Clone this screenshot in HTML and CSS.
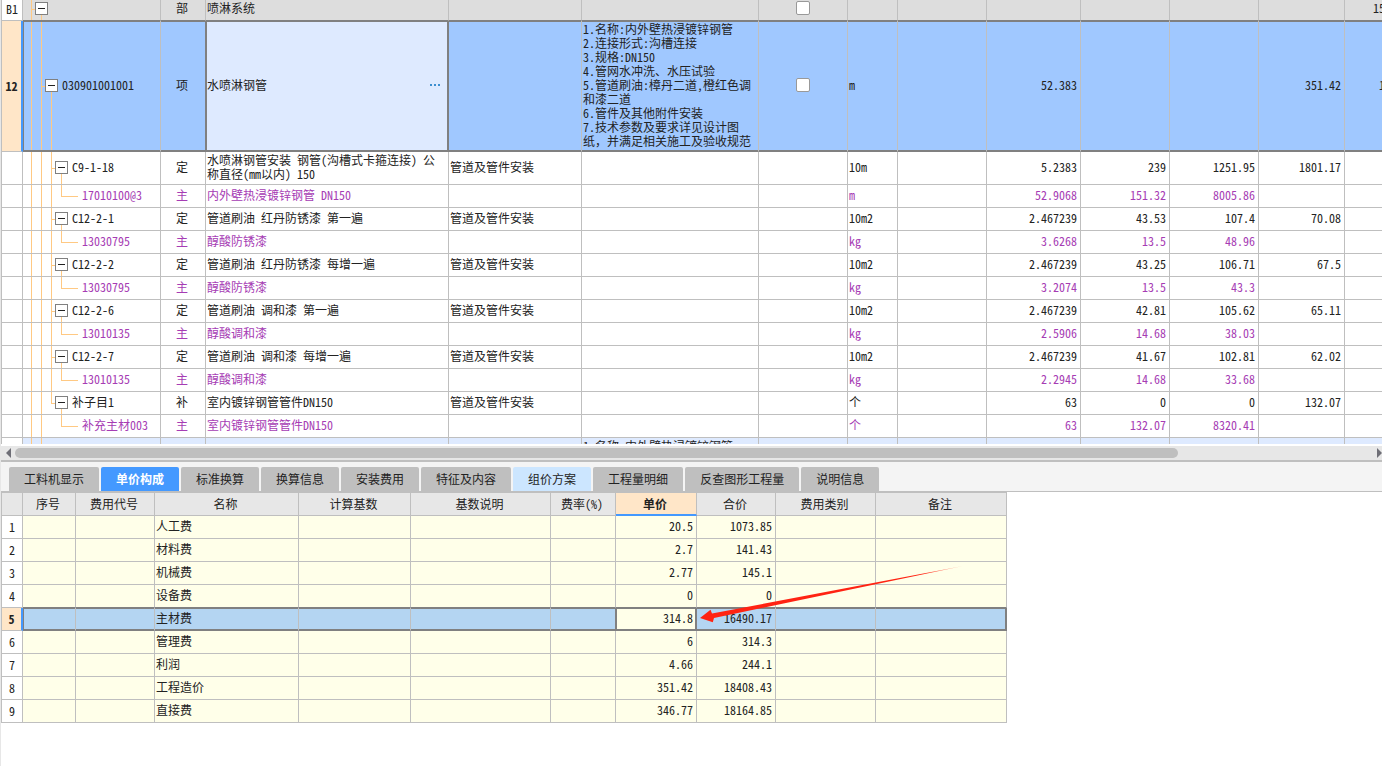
FILE: index.html
```html
<!DOCTYPE html>
<html lang="zh-CN">
<head>
<meta charset="utf-8">
<title>喷淋系统</title>
<link rel="stylesheet" href="styles.css">
</head>
<body>
<main class="app">
<section class="upper">
<table class="grid bill">
<colgroup><col class="w21"><col class="w138"><col class="w45"><col class="w243"><col class="w133"><col class="w177"><col class="w89"><col class="w50"><col class="w89"><col class="w94"><col class="w89"><col class="w89"><col class="w86"><col class="w86"></colgroup>
<tbody>
<tr class="section"><th scope="row">B1</th><td class="tree t1"><button class="fold" aria-label="折叠"></button></td><td class="mid">部</td><td>喷淋系统</td><td></td><td></td><td class="check"><input type="checkbox" aria-label="锁定"></td><td></td><td></td><td></td><td></td><td></td><td></td><td class="num">154620.35</td></tr>
<tr class="item"><th scope="row">12</th><td class="tree t2"><button class="fold" aria-label="折叠"></button>030901001001</td><td class="mid">项</td><td class="editing"><div class="editor"><span>水喷淋钢管</span><button class="more" aria-label="更多"><i></i><i></i><i></i></button></div></td><td></td><td class="desc">1.名称:内外壁热浸镀锌钢管<br>2.连接形式:沟槽连接<br>3.规格:DN150<br>4.管网水冲洗、水压试验<br>5.管道刷油:樟丹二道,橙红色调<br>和漆二道<br>6.管件及其他附件安装<br>7.技术参数及要求详见设计图<br>纸，并满足相关施工及验收规范</td><td class="check"><input type="checkbox" aria-label="锁定"></td><td>m</td><td></td><td class="num">52.383</td><td></td><td></td><td class="num">351.42</td><td class="num">18408.43</td></tr>
<tr class="double"><th></th><td class="tree t3"><button class="fold" aria-label="折叠"></button>C9-1-18</td><td class="mid">定</td><td>水喷淋钢管安装 钢管(沟槽式卡箍连接) 公<br>称直径(mm以内) 150</td><td>管道及管件安装</td><td></td><td></td><td>10m</td><td></td><td class="num">5.2383</td><td class="num">239</td><td class="num">1251.95</td><td class="num">1801.17</td><td></td></tr>
<tr class="material"><th></th><td class="tree t4">17010100@3</td><td class="mid">主</td><td>内外壁热浸镀锌钢管 DN150</td><td></td><td></td><td></td><td>m</td><td></td><td class="num">52.9068</td><td class="num">151.32</td><td class="num">8005.86</td><td></td><td></td></tr>
<tr><th></th><td class="tree t3"><button class="fold" aria-label="折叠"></button>C12-2-1</td><td class="mid">定</td><td>管道刷油 红丹防锈漆 第一遍</td><td>管道及管件安装</td><td></td><td></td><td>10m2</td><td></td><td class="num">2.467239</td><td class="num">43.53</td><td class="num">107.4</td><td class="num">70.08</td><td></td></tr>
<tr class="material"><th></th><td class="tree t4">13030795</td><td class="mid">主</td><td>醇酸防锈漆</td><td></td><td></td><td></td><td>kg</td><td></td><td class="num">3.6268</td><td class="num">13.5</td><td class="num">48.96</td><td></td><td></td></tr>
<tr><th></th><td class="tree t3"><button class="fold" aria-label="折叠"></button>C12-2-2</td><td class="mid">定</td><td>管道刷油 红丹防锈漆 每增一遍</td><td>管道及管件安装</td><td></td><td></td><td>10m2</td><td></td><td class="num">2.467239</td><td class="num">43.25</td><td class="num">106.71</td><td class="num">67.5</td><td></td></tr>
<tr class="material"><th></th><td class="tree t4">13030795</td><td class="mid">主</td><td>醇酸防锈漆</td><td></td><td></td><td></td><td>kg</td><td></td><td class="num">3.2074</td><td class="num">13.5</td><td class="num">43.3</td><td></td><td></td></tr>
<tr><th></th><td class="tree t3"><button class="fold" aria-label="折叠"></button>C12-2-6</td><td class="mid">定</td><td>管道刷油 调和漆 第一遍</td><td>管道及管件安装</td><td></td><td></td><td>10m2</td><td></td><td class="num">2.467239</td><td class="num">42.81</td><td class="num">105.62</td><td class="num">65.11</td><td></td></tr>
<tr class="material"><th></th><td class="tree t4">13010135</td><td class="mid">主</td><td>醇酸调和漆</td><td></td><td></td><td></td><td>kg</td><td></td><td class="num">2.5906</td><td class="num">14.68</td><td class="num">38.03</td><td></td><td></td></tr>
<tr><th></th><td class="tree t3"><button class="fold" aria-label="折叠"></button>C12-2-7</td><td class="mid">定</td><td>管道刷油 调和漆 每增一遍</td><td>管道及管件安装</td><td></td><td></td><td>10m2</td><td></td><td class="num">2.467239</td><td class="num">41.67</td><td class="num">102.81</td><td class="num">62.02</td><td></td></tr>
<tr class="material"><th></th><td class="tree t4">13010135</td><td class="mid">主</td><td>醇酸调和漆</td><td></td><td></td><td></td><td>kg</td><td></td><td class="num">2.2945</td><td class="num">14.68</td><td class="num">33.68</td><td></td><td></td></tr>
<tr><th></th><td class="tree t3 last"><button class="fold" aria-label="折叠"></button>补子目1</td><td class="mid">补</td><td>室内镀锌钢管管件DN150</td><td>管道及管件安装</td><td></td><td></td><td>个</td><td></td><td class="num">63</td><td class="num">0</td><td class="num">0</td><td class="num">132.07</td><td></td></tr>
<tr class="material"><th></th><td class="tree t4 last">补充主材003</td><td class="mid">主</td><td>室内镀锌钢管管件DN150</td><td></td><td></td><td></td><td>个</td><td></td><td class="num">63</td><td class="num">132.07</td><td class="num">8320.41</td><td></td><td></td></tr>
<tr class="next"><th></th><td class="tree t0"></td><td></td><td></td><td></td><td class="desc">1.名称:内外壁热浸镀锌钢管</td><td></td><td></td><td></td><td></td><td></td><td></td><td></td><td></td></tr>
</tbody>
</table>
</section>

<section class="lower">
<div class="scrollbar">
<button class="arrow left" aria-label="向左滚动"><svg width="5" height="10" viewBox="0 0 5 10"><path d="M5 0v10L0 5z"/></svg></button>
<div class="track"><div class="thumb"></div></div>
<button class="arrow right" aria-label="向右滚动"><svg width="5" height="10" viewBox="0 0 5 10"><path d="M0 0v10l5-5z"/></svg></button>
</div>
<nav class="tabs">
<button>工料机显示</button><button class="active">单价构成</button><button>标准换算</button><button>换算信息</button><button>安装费用</button><button>特征及内容</button><button class="hint">组价方案</button><button>工程量明细</button><button>反查图形工程量</button><button>说明信息</button>
</nav>
<div class="detail">
<table class="grid cost">
<colgroup><col class="w21"><col class="w53"><col class="w79"><col class="w144"><col class="w112"><col class="w140"><col class="w65"><col class="w81"><col class="w79"><col class="w100"><col class="w131"></colgroup>
<thead><tr><th></th><th>序号</th><th>费用代号</th><th>名称</th><th>计算基数</th><th>基数说明</th><th>费率(%)</th><th class="current">单价</th><th>合价</th><th>费用类别</th><th>备注</th></tr></thead>
<tbody>
<tr><th scope="row">1</th><td></td><td></td><td>人工费</td><td></td><td></td><td></td><td class="num">20.5</td><td class="num">1073.85</td><td></td><td></td></tr>
<tr><th scope="row">2</th><td></td><td></td><td>材料费</td><td></td><td></td><td></td><td class="num">2.7</td><td class="num">141.43</td><td></td><td></td></tr>
<tr><th scope="row">3</th><td></td><td></td><td>机械费</td><td></td><td></td><td></td><td class="num">2.77</td><td class="num">145.1</td><td></td><td></td></tr>
<tr class="before"><th scope="row">4</th><td></td><td></td><td>设备费</td><td></td><td></td><td></td><td class="num">0</td><td class="num">0</td><td></td><td></td></tr>
<tr class="picked"><th scope="row">5</th><td></td><td></td><td>主材费</td><td></td><td></td><td></td><td class="num focus">314.8</td><td class="num">16490.17</td><td></td><td></td></tr>
<tr><th scope="row">6</th><td></td><td></td><td>管理费</td><td></td><td></td><td></td><td class="num">6</td><td class="num">314.3</td><td></td><td></td></tr>
<tr><th scope="row">7</th><td></td><td></td><td>利润</td><td></td><td></td><td></td><td class="num">4.66</td><td class="num">244.1</td><td></td><td></td></tr>
<tr><th scope="row">8</th><td></td><td></td><td>工程造价</td><td></td><td></td><td></td><td class="num">351.42</td><td class="num">18408.43</td><td></td><td></td></tr>
<tr><th scope="row">9</th><td></td><td></td><td>直接费</td><td></td><td></td><td></td><td class="num">346.77</td><td class="num">18164.85</td><td></td><td></td></tr>
</tbody>
</table>
<svg class="pointer" width="268" height="60" viewBox="0 0 268 60" aria-hidden="true">
<defs><linearGradient id="fade" x1="0" x2="1" y1="0" y2="0"><stop offset=".85" stop-color="#ff2312"/><stop offset="1" stop-color="#ff2312" stop-opacity=".3"/></linearGradient></defs>
<path fill="url(#fade)" d="M3 54L13.500 45.800L15 49.500L266 2L17 54L15.800 58.300Z"/>
</svg>
</div>
</section>
</main>
</body>
</html>
```
FILE: styles.css
```css
* {
  box-sizing: border-box;
}

:root {
  --line: #bfbfbf;
  --frame: #808080;
  --blue: #4499ff;
  --peach: #ffe6c8;
  --rail: linear-gradient(#ffc983, #ffc983);
}

body {
  margin: 0;
  background: #fff;
  color: #222;
  font: 12px/14px "Noto Sans Mono CJK SC", "Noto Sans CJK SC", monospace;
}

button {
  margin: 0;
  padding: 0;
  border: 0;
  background: none;
  color: inherit;
  font: inherit;
}

.app {
  display: flex;
  flex-direction: column;
  height: 100vh;
  border-left: 1px solid #e7e7e7;
  overflow: hidden;
}

.upper {
  flex: 1;
  min-height: 0;
  overflow: hidden;
}

.lower {
  display: flex;
  flex: 0 0 322px;
  flex-direction: column;
  padding-top: 2px;
}

/* Shared grid look */
.grid {
  table-layout: fixed;
  border-collapse: separate;
  border-spacing: 0;
  border-left: 1px solid var(--line);
}

.grid th,
.grid td {
  height: 23px;
  padding: 0 3px 2px 1px;
  border-right: 1px solid var(--line);
  border-bottom: 1px solid var(--line);
  text-align: left;
  font-weight: 400;
  white-space: nowrap;
  vertical-align: middle;
}

.grid th {
  padding: 0;
  text-align: center;
}

.grid thead th {
  padding-right: 2px;
}

.grid .num {
  text-align: right;
}

.grid .mid,
.grid .check {
  text-align: center;
}

.grid .check {
  padding: 0 2px 2px;
}

.w21 { width: 21px; }
.w45 { width: 45px; }
.w50 { width: 50px; }
.w53 { width: 53px; }
.w65 { width: 65px; }
.w79 { width: 79px; }
.w81 { width: 81px; }
.w86 { width: 86px; }
.w89 { width: 89px; }
.w94 { width: 94px; }
.w100 { width: 100px; }
.w112 { width: 112px; }
.w131 { width: 131px; }
.w133 { width: 133px; }
.w138 { width: 138px; }
.w140 { width: 140px; }
.w144 { width: 144px; }
.w177 { width: 177px; }
.w243 { width: 243px; }

/* Bill of quantities, scrolled slightly past its first row */
.bill {
  width: 1430px;
  margin-top: -2px;
}

.bill .section td {
  border-bottom-color: var(--frame);
  background-color: #ddd;
}

.bill .item th,
.bill .item td {
  height: 131px;
}

.bill .item th,
.picked th {
  border-right: 2px solid var(--blue);
  background: var(--peach);
  font-weight: 700;
}

.bill .item td {
  border-bottom-color: var(--frame);
  background-color: #a0c8ff;
  box-shadow: inset 0 1px var(--frame), inset 0 -1px var(--frame);
}

.bill .item .tree {
  box-shadow: inset 1px 1px var(--frame), inset 0 -1px var(--frame);
}

.bill .item td:nth-child(3) {
  border-right-color: var(--frame);
}

.bill .item .editing {
  border-right-color: var(--frame);
  background-color: #deeaff;
  box-shadow: inset 1px 1px var(--frame), inset -1px -1px var(--frame);
}

.editor {
  display: flex;
  align-items: center;
  justify-content: space-between;
  padding-right: 5px;
}

.more {
  display: flex;
  gap: 2px;
}

.more i {
  width: 2px;
  height: 2px;
  background: #3c8fd0;
}

.bill .double th,
.bill .double td {
  height: 33px;
}

.material {
  color: #a63cb4;
}

.bill .next td,
.bill .next th {
  height: 131px;
  vertical-align: top;
}

.bill .next td {
  padding-top: 1px;
  background-color: #deeaff;
}

.fold {
  width: 13px;
  height: 13px;
  margin-right: 4px;
  border: 1px solid var(--frame);
  background: linear-gradient(#222, #222) center / 7px 1px no-repeat #fff;
  vertical-align: bottom;
}

.tree {
  background-repeat: no-repeat;
}

.bill .t0 {
  background-image: var(--rail), var(--rail);
  background-position: 8px 0, 18px 0;
  background-size: 1px 100%;
}

.bill .t1 {
  padding-left: 12px;
  background-image: var(--rail), var(--rail), var(--rail);
  background-position: 8px 0, 18px 100%, 8px 50%;
  background-size: 1px 100%, 1px 50%, 4px 1px;
}

.bill .t2 {
  padding-left: 22px;
  background-image: var(--rail), var(--rail), var(--rail), var(--rail);
  background-position: 8px 0, 18px 0, 28px 100%, 18px 50%;
  background-size: 1px 100%, 1px 100%, 1px 50%, 4px 1px;
}

.bill .t3 {
  padding-left: 32px;
  background-image: var(--rail), var(--rail), var(--rail), var(--rail), var(--rail);
  background-position: 8px 0, 18px 0, 28px 0, 38px 100%, 28px 50%;
  background-size: 1px 100%, 1px 100%, 1px 100%, 1px 50%, 4px 1px;
}

.bill .t4 {
  padding-left: 59px;
  background-image: var(--rail), var(--rail), var(--rail), var(--rail), var(--rail);
  background-position: 8px 0, 18px 0, 28px 0, 38px 0, 38px 50%;
  background-size: 1px 100%, 1px 100%, 1px 100%, 1px 50%, 17px 1px;
}

.bill .t3.last {
  background-size: 1px 100%, 1px 100%, 1px 50%, 1px 50%, 4px 1px;
}

.bill .t4.last {
  background-size: 1px 100%, 1px 100%, 0 0, 1px 50%, 17px 1px;
}

input[type="checkbox"] {
  width: 14px;
  height: 14px;
  margin: 0;
  appearance: none;
  border: 1px solid #999;
  border-radius: 2px;
  background: #fff;
  vertical-align: bottom;
}

/* Horizontal scrollbar */
.scrollbar {
  display: flex;
  align-items: center;
  height: 16px;
  border-bottom: 2px solid var(--line);
  background: #e7e7e7;
}

.arrow {
  display: flex;
  flex: none;
  fill: #6e6e76;
}

.arrow.left {
  padding: 0 4px 0 5px;
}

.track {
  flex: 1;
}

.thumb {
  width: 85.4%;
  height: 10px;
  border-radius: 5px;
  background: var(--line);
}

/* Tabs */
.tabs {
  display: flex;
  gap: 2px;
  padding: 5px 8px 0;
  border-bottom: 1px solid var(--line);
  background: #f4f4f4;
  font-family: "Noto Sans CJK SC", sans-serif;
}

.tabs button {
  height: 24px;
  padding: 0 15px;
  border-radius: 2px 2px 0 0;
  background: var(--line);
}

.tabs .active {
  background: var(--blue);
  color: #fff;
  font-weight: 700;
}

.tabs .hint {
  background: #cce6ff;
}

/* Unit price breakdown */
.detail {
  position: relative;
}

.cost {
  width: 1006px;
  border-top: 1px solid var(--line);
}

.cost thead th {
  background: #e7e7e7;
}

.cost thead .current {
  border-bottom: 2px solid var(--blue);
  background: var(--peach);
  font-weight: 700;
}

.cost td {
  background: #ffffe9;
}

.cost .before td {
  border-bottom-color: var(--frame);
}

.cost .picked td {
  border-bottom-color: var(--frame);
  background: #b4d5f2;
  box-shadow: inset 0 1px var(--frame), inset 0 -1px var(--frame);
}

.cost .picked td:nth-child(2) {
  box-shadow: inset 1px 1px var(--frame), inset 0 -1px var(--frame);
}

.cost .picked td:nth-child(7) {
  border-right-color: var(--frame);
}

.cost .picked .focus,
.cost .picked td:last-child {
  border-right-color: var(--frame);
  box-shadow: inset 0 1px var(--frame), inset -1px -1px var(--frame);
}

.cost .picked .focus {
  background: #ffffe9;
  box-shadow: inset 1px 1px var(--frame), inset -1px -1px var(--frame);
}

.pointer {
  position: absolute;
  top: 72px;
  left: 696px;
}
```
